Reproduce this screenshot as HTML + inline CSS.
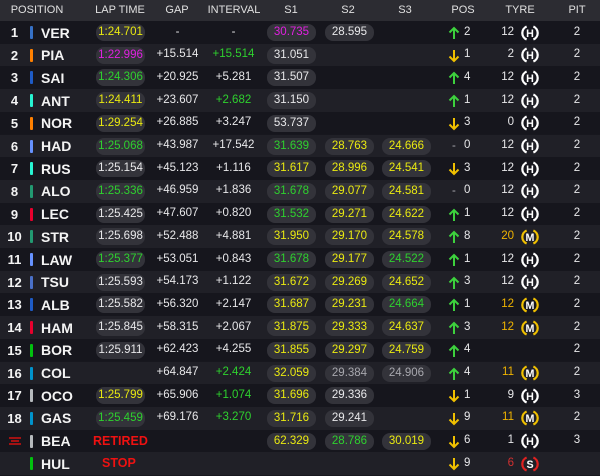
<!DOCTYPE html>
<html><head><meta charset="utf-8"><style>
*{margin:0;padding:0;box-sizing:border-box}
body{width:600px;height:476px;background:#17171e;font-family:"Liberation Sans",sans-serif;color:#e8e8ea;overflow:hidden;position:relative}
.h{position:absolute;left:0;top:0;width:600px;height:21px;background:#2c2c32;font-size:11px;color:#e0e0e0}
.h span{position:absolute;top:4px;transform:translateX(-50%)}
.r{position:absolute;left:0;width:600px;height:22.7px;font-size:11.5px}
.o{background:#16161d}.e{background:#202027}
.r>*{position:absolute}
.n{left:0;width:29px;text-align:center;top:4px;font-weight:bold;font-size:13px;color:#f4f4f4}
.b{left:30px;top:5px;width:3px;height:13px;border-radius:1px}
.c{left:41px;top:3.5px;font-weight:bold;font-size:14px;color:#f4f4f4}
.p{top:3px;height:17px;width:49px;border-radius:8px;background:#33333a;text-align:center;line-height:17px}
.lt{left:96px}.s1{left:267px}.s2{left:325px}.s3{left:382px}
.g{left:150px;width:55px;text-align:center;top:4.5px}
.i{left:206px;width:55px;text-align:center;top:4.5px}
.ar{left:448px;top:5px}
.pn{left:464px;top:4.5px}
.tn{left:490px;width:24px;text-align:right;top:4.5px}
.ti{left:521px;top:2.5px}
.pt{left:570px;width:14px;text-align:center;top:4.5px}
.y{color:#eaea10}.gr{color:#2ed12e}.pu{color:#e020e0}.w{color:#e8e8ea}.gy{color:#a8a8ae}.rd{color:#ee1111;font-weight:bold;font-size:12.5px}
.m{color:#f0b400}
</style></head><body>
<svg width="0" height="0" style="position:absolute">
<defs>
<symbol id="up" viewBox="0 0 12 14"><path d="M6 13V2M1.5 6.5L6 2l4.5 4.5" stroke="#3dd13d" stroke-width="2" fill="none"/></symbol>
<symbol id="dn" viewBox="0 0 12 14"><path d="M6 1v11M1.5 7.5L6 12l4.5-4.5" stroke="#f0c000" stroke-width="2" fill="none"/></symbol>
<symbol id="arc" viewBox="0 0 16 16"><path d="M5 2.2A6.3 6.3 0 0 0 5 13.8M11 2.2A6.3 6.3 0 0 1 11 13.8" fill="none" stroke="currentColor" stroke-width="2"/></symbol>
</defs></svg>
<div class="h"><span style="left:37px">POSITION</span><span style="left:120px">LAP TIME</span><span style="left:177px">GAP</span><span style="left:234px">INTERVAL</span><span style="left:291px">S1</span><span style="left:348px">S2</span><span style="left:405px">S3</span><span style="left:463px">POS</span><span style="left:520px">TYRE</span><span style="left:577px">PIT</span></div>

<div class="r o" style="top:21px"><span class="n">1</span><i class="b" style="background:#3671c6"></i><span class="c">VER</span><span class="p lt y">1:24.701</span><span class="g">-</span><span class="i">-</span><span class="p s1 pu">30.735</span><span class="p s2">28.595</span><svg class="ar" width="12" height="14"><use href="#up"/></svg><span class="pn">2</span><span class="tn">12</span><svg class="ti" width="18" height="18" viewBox="0 0 16 16" style="color:#fff"><use href="#arc"/><text x="8" y="11.5" font-size="9.5" font-weight="bold" text-anchor="middle" fill="#fff" font-family="Liberation Sans">H</text></svg><span class="pt">2</span></div>

<div class="r e" style="top:43.7px"><span class="n">2</span><i class="b" style="background:#ff8000"></i><span class="c">PIA</span><span class="p lt pu">1:22.996</span><span class="g">+15.514</span><span class="i gr">+15.514</span><span class="p s1">31.051</span><svg class="ar" width="12" height="14"><use href="#dn"/></svg><span class="pn">1</span><span class="tn">2</span><svg class="ti" width="18" height="18" viewBox="0 0 16 16" style="color:#fff"><use href="#arc"/><text x="8" y="11.5" font-size="9.5" font-weight="bold" text-anchor="middle" fill="#fff" font-family="Liberation Sans">H</text></svg><span class="pt">2</span></div>

<div class="r o" style="top:66.4px"><span class="n">3</span><i class="b" style="background:#1e5bc6"></i><span class="c">SAI</span><span class="p lt gr">1:24.306</span><span class="g">+20.925</span><span class="i">+5.281</span><span class="p s1">31.507</span><svg class="ar" width="12" height="14"><use href="#up"/></svg><span class="pn">4</span><span class="tn">12</span><svg class="ti" width="18" height="18" viewBox="0 0 16 16" style="color:#fff"><use href="#arc"/><text x="8" y="11.5" font-size="9.5" font-weight="bold" text-anchor="middle" fill="#fff" font-family="Liberation Sans">H</text></svg><span class="pt">2</span></div>

<div class="r e" style="top:89.1px"><span class="n">4</span><i class="b" style="background:#27f4d2"></i><span class="c">ANT</span><span class="p lt y">1:24.411</span><span class="g">+23.607</span><span class="i gr">+2.682</span><span class="p s1">31.150</span><svg class="ar" width="12" height="14"><use href="#up"/></svg><span class="pn">1</span><span class="tn">12</span><svg class="ti" width="18" height="18" viewBox="0 0 16 16" style="color:#fff"><use href="#arc"/><text x="8" y="11.5" font-size="9.5" font-weight="bold" text-anchor="middle" fill="#fff" font-family="Liberation Sans">H</text></svg><span class="pt">2</span></div>

<div class="r o" style="top:111.8px"><span class="n">5</span><i class="b" style="background:#ff8000"></i><span class="c">NOR</span><span class="p lt y">1:29.254</span><span class="g">+26.885</span><span class="i">+3.247</span><span class="p s1">53.737</span><svg class="ar" width="12" height="14"><use href="#dn"/></svg><span class="pn">3</span><span class="tn">0</span><svg class="ti" width="18" height="18" viewBox="0 0 16 16" style="color:#fff"><use href="#arc"/><text x="8" y="11.5" font-size="9.5" font-weight="bold" text-anchor="middle" fill="#fff" font-family="Liberation Sans">H</text></svg><span class="pt">2</span></div>

<div class="r e" style="top:134.5px"><span class="n">6</span><i class="b" style="background:#6692ff"></i><span class="c">HAD</span><span class="p lt gr">1:25.068</span><span class="g">+43.987</span><span class="i">+17.542</span><span class="p s1 gr">31.639</span><span class="p s2 y">28.763</span><span class="p s3 y">24.666</span><span class="ar gy" style="left:452px">-</span><span class="pn">0</span><span class="tn">12</span><svg class="ti" width="18" height="18" viewBox="0 0 16 16" style="color:#fff"><use href="#arc"/><text x="8" y="11.5" font-size="9.5" font-weight="bold" text-anchor="middle" fill="#fff" font-family="Liberation Sans">H</text></svg><span class="pt">2</span></div>

<div class="r o" style="top:157.2px"><span class="n">7</span><i class="b" style="background:#27f4d2"></i><span class="c">RUS</span><span class="p lt">1:25.154</span><span class="g">+45.123</span><span class="i">+1.116</span><span class="p s1 y">31.617</span><span class="p s2 y">28.996</span><span class="p s3 y">24.541</span><svg class="ar" width="12" height="14"><use href="#dn"/></svg><span class="pn">3</span><span class="tn">12</span><svg class="ti" width="18" height="18" viewBox="0 0 16 16" style="color:#fff"><use href="#arc"/><text x="8" y="11.5" font-size="9.5" font-weight="bold" text-anchor="middle" fill="#fff" font-family="Liberation Sans">H</text></svg><span class="pt">2</span></div>

<div class="r e" style="top:179.9px"><span class="n">8</span><i class="b" style="background:#229971"></i><span class="c">ALO</span><span class="p lt gr">1:25.336</span><span class="g">+46.959</span><span class="i">+1.836</span><span class="p s1 gr">31.678</span><span class="p s2 y">29.077</span><span class="p s3 y">24.581</span><span class="ar gy" style="left:452px">-</span><span class="pn">0</span><span class="tn">12</span><svg class="ti" width="18" height="18" viewBox="0 0 16 16" style="color:#fff"><use href="#arc"/><text x="8" y="11.5" font-size="9.5" font-weight="bold" text-anchor="middle" fill="#fff" font-family="Liberation Sans">H</text></svg><span class="pt">2</span></div>

<div class="r o" style="top:202.6px"><span class="n">9</span><i class="b" style="background:#e8002d"></i><span class="c">LEC</span><span class="p lt">1:25.425</span><span class="g">+47.607</span><span class="i">+0.820</span><span class="p s1 gr">31.532</span><span class="p s2 y">29.271</span><span class="p s3 y">24.622</span><svg class="ar" width="12" height="14"><use href="#up"/></svg><span class="pn">1</span><span class="tn">12</span><svg class="ti" width="18" height="18" viewBox="0 0 16 16" style="color:#fff"><use href="#arc"/><text x="8" y="11.5" font-size="9.5" font-weight="bold" text-anchor="middle" fill="#fff" font-family="Liberation Sans">H</text></svg><span class="pt">2</span></div>

<div class="r e" style="top:225.3px"><span class="n">10</span><i class="b" style="background:#229971"></i><span class="c">STR</span><span class="p lt">1:25.698</span><span class="g">+52.488</span><span class="i">+4.881</span><span class="p s1 y">31.950</span><span class="p s2 y">29.170</span><span class="p s3 y">24.578</span><svg class="ar" width="12" height="14"><use href="#up"/></svg><span class="pn">8</span><span class="tn m">20</span><svg class="ti" width="18" height="18" viewBox="0 0 16 16" style="color:#f0c000"><use href="#arc"/><text x="8" y="11.5" font-size="9.5" font-weight="bold" text-anchor="middle" fill="#fff" font-family="Liberation Sans">M</text></svg><span class="pt">2</span></div>

<div class="r o" style="top:248px"><span class="n">11</span><i class="b" style="background:#6692ff"></i><span class="c">LAW</span><span class="p lt gr">1:25.377</span><span class="g">+53.051</span><span class="i">+0.843</span><span class="p s1 gr">31.678</span><span class="p s2 y">29.177</span><span class="p s3 gr">24.522</span><svg class="ar" width="12" height="14"><use href="#up"/></svg><span class="pn">1</span><span class="tn">12</span><svg class="ti" width="18" height="18" viewBox="0 0 16 16" style="color:#fff"><use href="#arc"/><text x="8" y="11.5" font-size="9.5" font-weight="bold" text-anchor="middle" fill="#fff" font-family="Liberation Sans">H</text></svg><span class="pt">2</span></div>

<div class="r e" style="top:270.7px"><span class="n">12</span><i class="b" style="background:#4a70c8"></i><span class="c">TSU</span><span class="p lt">1:25.593</span><span class="g">+54.173</span><span class="i">+1.122</span><span class="p s1 y">31.672</span><span class="p s2 y">29.269</span><span class="p s3 y">24.652</span><svg class="ar" width="12" height="14"><use href="#up"/></svg><span class="pn">3</span><span class="tn">12</span><svg class="ti" width="18" height="18" viewBox="0 0 16 16" style="color:#fff"><use href="#arc"/><text x="8" y="11.5" font-size="9.5" font-weight="bold" text-anchor="middle" fill="#fff" font-family="Liberation Sans">H</text></svg><span class="pt">2</span></div>

<div class="r o" style="top:293.4px"><span class="n">13</span><i class="b" style="background:#1e5bc6"></i><span class="c">ALB</span><span class="p lt">1:25.582</span><span class="g">+56.320</span><span class="i">+2.147</span><span class="p s1 y">31.687</span><span class="p s2 y">29.231</span><span class="p s3 gr">24.664</span><svg class="ar" width="12" height="14"><use href="#up"/></svg><span class="pn">1</span><span class="tn m">12</span><svg class="ti" width="18" height="18" viewBox="0 0 16 16" style="color:#f0c000"><use href="#arc"/><text x="8" y="11.5" font-size="9.5" font-weight="bold" text-anchor="middle" fill="#fff" font-family="Liberation Sans">M</text></svg><span class="pt">2</span></div>

<div class="r e" style="top:316.1px"><span class="n">14</span><i class="b" style="background:#e8002d"></i><span class="c">HAM</span><span class="p lt">1:25.845</span><span class="g">+58.315</span><span class="i">+2.067</span><span class="p s1 y">31.875</span><span class="p s2 y">29.333</span><span class="p s3 y">24.637</span><svg class="ar" width="12" height="14"><use href="#up"/></svg><span class="pn">3</span><span class="tn m">12</span><svg class="ti" width="18" height="18" viewBox="0 0 16 16" style="color:#f0c000"><use href="#arc"/><text x="8" y="11.5" font-size="9.5" font-weight="bold" text-anchor="middle" fill="#fff" font-family="Liberation Sans">M</text></svg><span class="pt">2</span></div>

<div class="r o" style="top:338.8px"><span class="n">15</span><i class="b" style="background:#01c00e"></i><span class="c">BOR</span><span class="p lt">1:25.911</span><span class="g">+62.423</span><span class="i">+4.255</span><span class="p s1 y">31.855</span><span class="p s2 y">29.297</span><span class="p s3 y">24.759</span><svg class="ar" width="12" height="14"><use href="#up"/></svg><span class="pn">4</span><span class="pt">2</span></div>

<div class="r e" style="top:361.5px"><span class="n">16</span><i class="b" style="background:#0093cc"></i><span class="c">COL</span><span class="g">+64.847</span><span class="i gr">+2.424</span><span class="p s1 y">32.059</span><span class="p s2 gy">29.384</span><span class="p s3 gy">24.906</span><svg class="ar" width="12" height="14"><use href="#up"/></svg><span class="pn">4</span><span class="tn m">11</span><svg class="ti" width="18" height="18" viewBox="0 0 16 16" style="color:#f0c000"><use href="#arc"/><text x="8" y="11.5" font-size="9.5" font-weight="bold" text-anchor="middle" fill="#fff" font-family="Liberation Sans">M</text></svg><span class="pt">2</span></div>

<div class="r o" style="top:384.2px"><span class="n">17</span><i class="b" style="background:#b6babd"></i><span class="c">OCO</span><span class="p lt y">1:25.799</span><span class="g">+65.906</span><span class="i gr">+1.074</span><span class="p s1 y">31.696</span><span class="p s2">29.336</span><svg class="ar" width="12" height="14"><use href="#dn"/></svg><span class="pn">1</span><span class="tn">9</span><svg class="ti" width="18" height="18" viewBox="0 0 16 16" style="color:#fff"><use href="#arc"/><text x="8" y="11.5" font-size="9.5" font-weight="bold" text-anchor="middle" fill="#fff" font-family="Liberation Sans">H</text></svg><span class="pt">3</span></div>

<div class="r e" style="top:406.9px"><span class="n">18</span><i class="b" style="background:#0093cc"></i><span class="c">GAS</span><span class="p lt gr">1:25.459</span><span class="g">+69.176</span><span class="i gr">+3.270</span><span class="p s1 y">31.716</span><span class="p s2">29.241</span><svg class="ar" width="12" height="14"><use href="#dn"/></svg><span class="pn">9</span><span class="tn m">11</span><svg class="ti" width="18" height="18" viewBox="0 0 16 16" style="color:#f0c000"><use href="#arc"/><text x="8" y="11.5" font-size="9.5" font-weight="bold" text-anchor="middle" fill="#fff" font-family="Liberation Sans">M</text></svg><span class="pt">2</span></div>

<div class="r o" style="top:429.6px"><svg style="left:9px;top:7px" width="12" height="8"><path d="M0 1h12M2 4h8M0 7h12" stroke="#d01010" stroke-width="1.6"/></svg><i class="b" style="background:#b6babd"></i><span class="c">BEA</span><span class="rd" style="left:93px;top:4px">RETIRED</span><span class="p s1 y">62.329</span><span class="p s2 gr">28.786</span><span class="p s3 y">30.019</span><svg class="ar" width="12" height="14"><use href="#dn"/></svg><span class="pn">6</span><span class="tn">1</span><svg class="ti" width="18" height="18" viewBox="0 0 16 16" style="color:#fff"><use href="#arc"/><text x="8" y="11.5" font-size="9.5" font-weight="bold" text-anchor="middle" fill="#fff" font-family="Liberation Sans">H</text></svg><span class="pt">3</span></div>

<div class="r e" style="top:452.3px"><i class="b" style="background:#01c00e"></i><span class="c">HUL</span><span class="rd" style="left:102px;top:4px">STOP</span><svg class="ar" width="12" height="14"><use href="#dn"/></svg><span class="pn">9</span><span class="tn" style="color:#d03030">6</span><svg class="ti" width="18" height="18" viewBox="0 0 16 16" style="color:#e02020"><use href="#arc"/><text x="8" y="11.5" font-size="9.5" font-weight="bold" text-anchor="middle" fill="#fff" font-family="Liberation Sans">S</text></svg></div>
</body></html>
